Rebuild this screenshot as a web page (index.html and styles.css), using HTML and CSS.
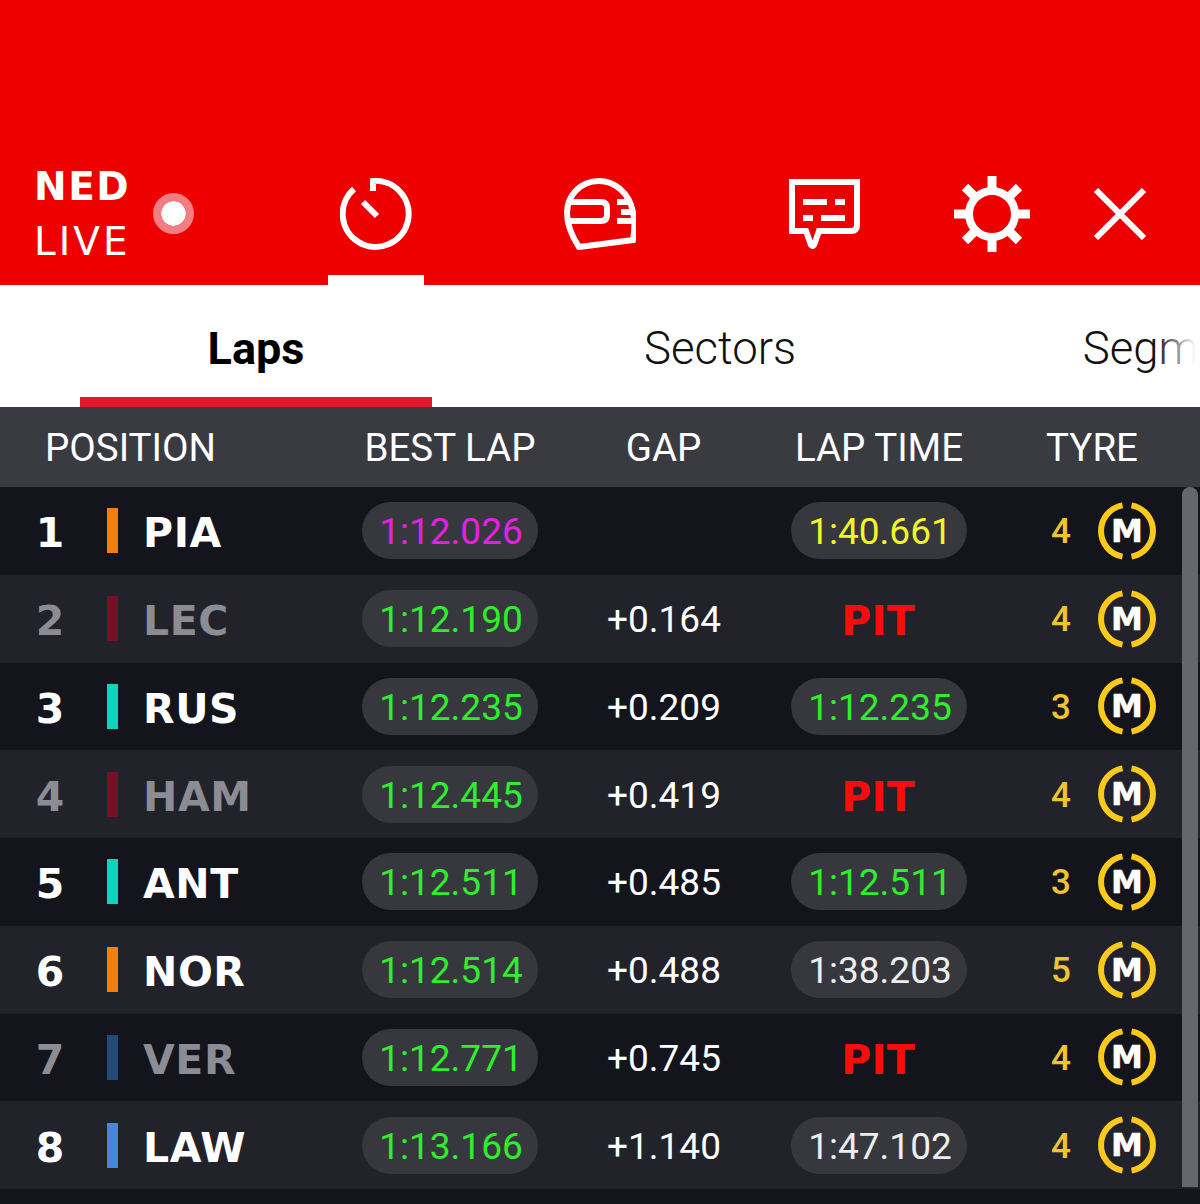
FILE: index.html
```html
<!DOCTYPE html>
<html>
<head>
    <meta charset="UTF-8">
    <title>Live Timing</title>
    <link rel="stylesheet" href="styles.css">
</head>

<body>
    <svg class="sprite">
        <symbol id="tyre-m" viewBox="0 0 58 58">
            <path class="tyre-ring" d="M24.5 3.4A26 26 0 0 0 24.5 54.6M33.5 3.4A26 26 0 0 1 33.5 54.6"/>
            <text class="tyre-letter" x="29" y="40" text-anchor="middle">M</text>
        </symbol>
    </svg>

    <div class="app">
        <header class="topbar">
            <div class="session">
                <div class="session-name">
                    <div class="session-ned">NED</div>
                    <div class="session-live">LIVE</div>
                </div>
                <span class="live-dot"></span>
            </div>
            <nav class="nav">
                <div class="nav-item active">
                    <svg class="icon" width="72" height="72" viewBox="0 0 72 72">
                        <path d="M33 13V3A33 33 0 1 1 14 11"/>
                        <path d="M23 24L37 38"/>
                    </svg>
                </div>
                <div class="nav-item">
                    <svg class="icon" width="72" height="72" viewBox="0 0 72 72">
                        <path d="M15 69L69 62C71 50 71 42 69 34C65 14 50 3 35 3C16 3 3 18 3 35C3 48 9 60 15 69Z"/>
                        <path d="M4 24H37Q43 24 43 30V37Q43 43 37 43H4"/>
                        <path d="M53 24H68M57 34H69M53 43H70"/>
                    </svg>
                </div>
                <div class="nav-item">
                    <svg class="icon" width="72" height="72" viewBox="0 0 72 72">
                        <path d="M4 4H69V47Q69 53 63 53H31L26 67Q25 69 23 67L18 53H4Z"/>
                        <path d="M15 24H39M47 24H57M15 40H25M33 40H57"/>
                    </svg>
                </div>
            </nav>
            <div class="action action-gear">
                <svg class="icon" width="76" height="76" viewBox="0 0 76 76">
                    <circle cx="38" cy="38" r="23" stroke-width="8"/>
                    <path stroke-width="9" d="M38 0V16M38 60V76M0 38H16M60 38H76M11 11L22 22M65 65L54 54M65 11L54 22M11 65L22 54"/>
                </svg>
            </div>
            <div class="action action-close">
                <svg class="icon" width="52" height="52" viewBox="0 0 52 52">
                    <path d="M2 2L50 50M50 2L2 50"/>
                </svg>
            </div>
        </header>

        <div class="tabs">
            <div class="tab selected">Laps</div>
            <div class="tab">Sectors</div>
            <div class="tab">Segments</div>
            <div class="tabs-fade"></div>
        </div>

        <div class="table">
            <div class="thead">
                <div class="th-position">POSITION</div>
                <div>BEST LAP</div>
                <div>GAP</div>
                <div>LAP TIME</div>
                <div>TYRE</div>
            </div>

            <div class="row">
                <div class="driver"><span class="rank">1</span><span class="team mclaren"></span><span class="code">PIA</span></div>
                <div><span class="pill purple">1:12.026</span></div>
                <div class="gap"></div>
                <div><span class="pill yellow">1:40.661</span></div>
                <div class="tyre"><span class="tyre-age">4</span><svg class="tyre-icon"><use href="#tyre-m"/></svg></div>
            </div>
            <div class="row even dim">
                <div class="driver"><span class="rank">2</span><span class="team ferrari"></span><span class="code">LEC</span></div>
                <div><span class="pill green">1:12.190</span></div>
                <div class="gap">+0.164</div>
                <div class="pit">PIT</div>
                <div class="tyre"><span class="tyre-age">4</span><svg class="tyre-icon"><use href="#tyre-m"/></svg></div>
            </div>
            <div class="row">
                <div class="driver"><span class="rank">3</span><span class="team mercedes"></span><span class="code">RUS</span></div>
                <div><span class="pill green">1:12.235</span></div>
                <div class="gap">+0.209</div>
                <div><span class="pill green">1:12.235</span></div>
                <div class="tyre"><span class="tyre-age">3</span><svg class="tyre-icon"><use href="#tyre-m"/></svg></div>
            </div>
            <div class="row even dim">
                <div class="driver"><span class="rank">4</span><span class="team ferrari"></span><span class="code">HAM</span></div>
                <div><span class="pill green">1:12.445</span></div>
                <div class="gap">+0.419</div>
                <div class="pit">PIT</div>
                <div class="tyre"><span class="tyre-age">4</span><svg class="tyre-icon"><use href="#tyre-m"/></svg></div>
            </div>
            <div class="row">
                <div class="driver"><span class="rank">5</span><span class="team mercedes"></span><span class="code">ANT</span></div>
                <div><span class="pill green">1:12.511</span></div>
                <div class="gap">+0.485</div>
                <div><span class="pill green">1:12.511</span></div>
                <div class="tyre"><span class="tyre-age">3</span><svg class="tyre-icon"><use href="#tyre-m"/></svg></div>
            </div>
            <div class="row even">
                <div class="driver"><span class="rank">6</span><span class="team mclaren"></span><span class="code">NOR</span></div>
                <div><span class="pill green">1:12.514</span></div>
                <div class="gap">+0.488</div>
                <div><span class="pill">1:38.203</span></div>
                <div class="tyre"><span class="tyre-age">5</span><svg class="tyre-icon"><use href="#tyre-m"/></svg></div>
            </div>
            <div class="row dim">
                <div class="driver"><span class="rank">7</span><span class="team redbull"></span><span class="code">VER</span></div>
                <div><span class="pill green">1:12.771</span></div>
                <div class="gap">+0.745</div>
                <div class="pit">PIT</div>
                <div class="tyre"><span class="tyre-age">4</span><svg class="tyre-icon"><use href="#tyre-m"/></svg></div>
            </div>
            <div class="row even">
                <div class="driver"><span class="rank">8</span><span class="team racingbulls"></span><span class="code">LAW</span></div>
                <div><span class="pill green">1:13.166</span></div>
                <div class="gap">+1.140</div>
                <div><span class="pill">1:47.102</span></div>
                <div class="tyre"><span class="tyre-age">4</span><svg class="tyre-icon"><use href="#tyre-m"/></svg></div>
            </div>
            <div class="row">
                <div class="driver"></div>
                <div><span class="pill"></span></div>
                <div class="gap"></div>
                <div><span class="pill"></span></div>
                <div class="tyre"><span class="tyre-age"></span><svg class="tyre-icon"><use href="#tyre-m"/></svg></div>
            </div>

            <div class="scrollbar"></div>
        </div>
    </div>
</body>
</html>
```
FILE: styles.css
```css
html, body { margin: 0; padding: 0; background: #13141c; }
body { font-family: "Roboto", sans-serif; }
.sprite { position: absolute; width: 0; height: 0; }
.app { height: 1204px; overflow: hidden; }

/* top bar */
.topbar {
    height: 285px;
    box-sizing: border-box;
    background: #ee0000;
    display: flex;
    align-items: flex-end;
}
.session {
    width: 264px;
    height: 142px;
    box-sizing: border-box;
    padding-left: 34px;
    display: flex;
    align-items: center;
    gap: 22px;
    color: #fff;
}
.session-name { font-family: "DejaVu Sans", sans-serif; font-size: 39px; line-height: 55px; }
.session-ned { font-weight: bold; letter-spacing: 1.5px; }
.session-live { letter-spacing: 3px; }
.live-dot {
    width: 25px;
    height: 25px;
    border-radius: 50%;
    background: #fff;
    border: 8.5px solid #f27d82;
    background-clip: padding-box;
    flex-shrink: 0;
    margin-top: -2px;
}
.nav { display: flex; }
.nav-item, .action {
    height: 142px;
    display: flex;
    align-items: center;
    justify-content: center;
    position: relative;
}
.nav-item { width: 224px; }
.nav-item.active::after {
    content: "";
    position: absolute;
    left: 64px;
    bottom: 0;
    width: 96px;
    height: 10px;
    background: #fff;
}
.action-gear { width: 112px; }
.action-close { width: 128px; margin-left: 8px; }
.icon { fill: none; stroke: #fff; stroke-width: 6; display: block; }

/* tabs */
.tabs {
    height: 122px;
    background: #fff;
    display: flex;
    gap: 112px;
    padding-left: 80px;
    position: relative;
    overflow: hidden;
}
.tab {
    flex: 0 0 352px;
    box-sizing: border-box;
    text-align: center;
    font-size: 45.5px;
    font-weight: 300;
    line-height: 128px;
    color: #111;
}
.tab.selected { font-weight: 700; font-size: 45px; color: #000; border-bottom: 10px solid #dc1c2e; }
.tabs-fade {
    position: absolute;
    right: 0;
    top: 0;
    bottom: 0;
    width: 44px;
    background: linear-gradient(to right, rgba(255,255,255,0), #fff 90%);
}

/* table */
.table { position: relative; }
.thead, .row {
    display: grid;
    grid-template-columns: 340px 220px 207px 224px 209px;
    align-items: center;
    text-align: center;
}
.thead {
    height: 80px;
    padding-top: 1px;
    box-sizing: border-box;
    background: #3a3b41;
    color: #fff;
    font-size: 38.5px;
}
.thead div:last-child { padding-right: 7px; }
.th-position { text-align: left; padding-left: 45px; }
.row { height: 87.75px; background: #13141c; color: #fff; }
.row.even { background: #21222a; }
.driver { display: flex; align-items: center; text-align: left; }
.rank {
    width: 60px;
    margin-left: 20px;
    padding-top: 5px;
    text-align: center;
    font-family: "DejaVu Sans", sans-serif;
    font-weight: bold;
    font-size: 41px;
}
.team { width: 11px; height: 45px; margin: 0 27px; }
.code {
    margin-left: -2px;
    padding-top: 5px;
    font-family: "DejaVu Sans", sans-serif;
    font-weight: bold;
    font-size: 41px;
    letter-spacing: 0.6px;
}
.mclaren { background: #f57f0c; }
.ferrari { background: #c80020; }
.mercedes { background: #0fd3bb; }
.redbull { background: #3680d8; }
.racingbulls { background: #4a85dc; }
.dim .rank, .dim .code { color: #8c8c94; }
.dim .team { opacity: 0.5; }
.pill {
    display: inline-block;
    box-sizing: border-box;
    width: 176px;
    height: 57px;
    padding-left: 2px;
    border-radius: 29px;
    background: #37383e;
    font-size: 37px;
    line-height: 60px;
    color: #eeeeee;
    vertical-align: middle;
}
.purple { color: #e620e0; }
.green { color: #2eee2e; }
.yellow { color: #f4f428; }
.gap { font-size: 37px; padding-top: 2px; padding-left: 1px; }
.pit {
    padding-top: 5px;
    padding-right: 2px;
    font-family: "DejaVu Sans", sans-serif;
    font-weight: bold;
    font-size: 41px;
    color: #f80d0d;
}
.tyre { display: flex; align-items: center; padding-left: 60px; }
.tyre-age { width: 20px; padding-top: 2px; text-align: center; font-size: 35px; font-weight: 500; color: #f1c232; }
.tyre-icon { width: 58px; height: 58px; margin-left: 27px; display: block; }
.tyre-ring { fill: none; stroke: #fbc91b; stroke-width: 6; }
.tyre-letter {
    font-family: "DejaVu Sans", sans-serif;
    font-weight: bold;
    font-size: 32px;
    fill: #fff;
    stroke: #fff;
    stroke-width: 0.5;
    stroke-linejoin: round;
}
.scrollbar {
    position: absolute;
    left: 1182px;
    top: 80px;
    width: 16px;
    height: 700px;
    border-radius: 8px 8px 0 0;
    background: #66666e;
}
```
